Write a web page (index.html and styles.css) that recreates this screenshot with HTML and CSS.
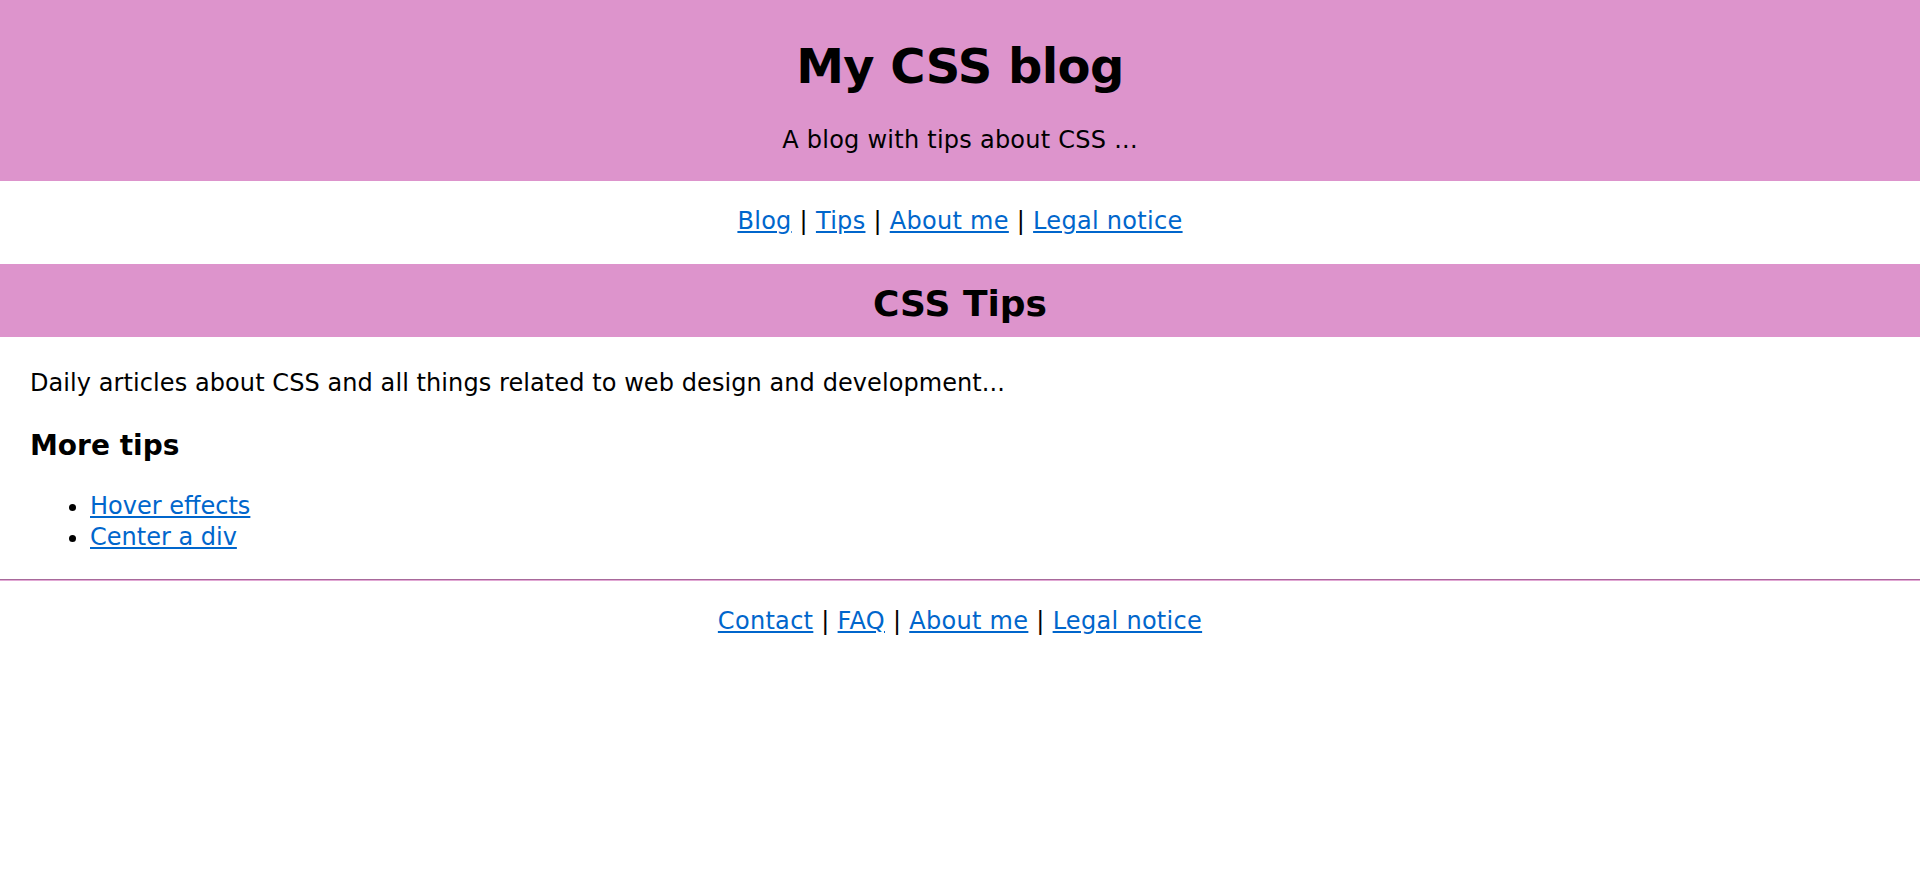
FILE: index.html
```html
<!DOCTYPE html>
<html lang="en">
<head>
<meta charset="utf-8">
<title>My CSS blog</title>
<link rel="stylesheet" href="styles.css">
</head>
<body>
<header class="site-header">
  <h1 class="site-title">My CSS blog</h1>
  <p class="site-tagline">A blog with tips about CSS ...</p>
</header>
<nav class="site-nav">
  <p class="link-row"><a href="#">Blog</a> | <a href="#">Tips</a> | <a href="#">About me</a> | <a href="#">Legal notice</a></p>
</nav>
<h2 class="section-bar">CSS Tips</h2>
<main class="content">
  <p class="intro">Daily articles about CSS and all things related to web design and development...</p>
  <h3 class="sub-title">More tips</h3>
  <ul class="tip-list">
    <li><a href="#">Hover effects</a></li>
    <li><a href="#">Center a div</a></li>
  </ul>
</main>
<hr class="divider">
<footer class="site-footer">
  <p class="link-row"><a href="#">Contact</a> | <a href="#">FAQ</a> | <a href="#">About me</a> | <a href="#">Legal notice</a></p>
</footer>
</body>
</html>
```

FILE: styles.css
```css
html, body {
  margin: 0;
  padding: 0;
  background: #ffffff;
}
body {
  font-family: "DejaVu Sans", "Liberation Sans", sans-serif;
  font-size: 24px;
  color: #000000;
}
a {
  color: #0066cc;
}
.site-header {
  background: #dd94cc;
  text-align: center;
  padding: 6px 0 3px;
}
.site-title {
  font-size: 48px;
  font-weight: bold;
  letter-spacing: -0.55px;
  margin: 32px 0;
}
.site-tagline {
  margin: 24px 0;
  letter-spacing: 0.25px;
}
.site-nav {
  text-align: center;
  padding: 2px 0 5px;
}
.link-row {
  margin: 24px 0;
  letter-spacing: 0.3px;
}
.section-bar {
  background: #dd94cc;
  text-align: center;
  font-size: 36px;
  margin: 0;
  padding: 19px 0 13px;
}
.content {
  padding: 7px 30px 3px;
  line-height: 1.25;
}
.intro {
  margin: 24px 0;
  letter-spacing: 0.08px;
}
.sub-title {
  font-size: 28px;
  margin: 30px 0 28px;
}
.tip-list {
  margin: 24px 0;
  padding-left: 60px;
}
.tip-list li {
  line-height: 30.5px;
}
.divider {
  margin: 0;
  height: 0;
  border: 0;
  border-top: 1px solid #a8699b;
  border-bottom: 1px solid #e2a9d5;
}
.site-footer {
  text-align: center;
  padding: 2px 0 0;
}
```
